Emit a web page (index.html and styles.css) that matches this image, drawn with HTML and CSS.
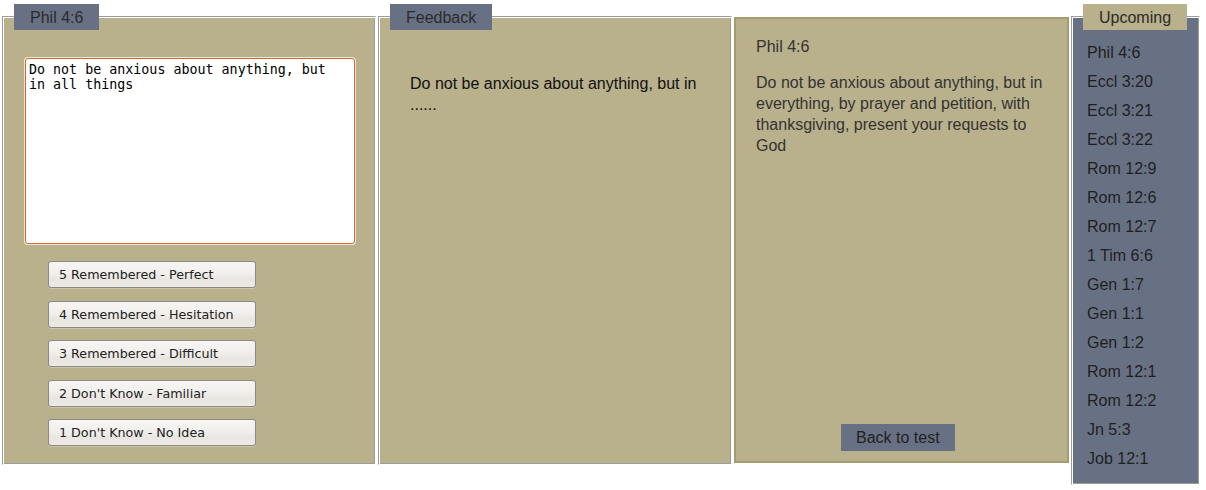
FILE: index.html
```html
<!DOCTYPE html>
<html>
<head>
<meta charset="utf-8">
<title>Memory verse</title>
<link rel="stylesheet" href="styles.css">
</head>
<body>
<div class="layout">
  <section class="panel panel-test">
    <div class="tab tab-slate">Phil 4:6</div>
    <textarea class="answer" spellcheck="false">Do not be anxious about anything, but in all things</textarea>
    <div class="grades">
      <button class="grade">5 Remembered - Perfect</button>
      <button class="grade">4 Remembered - Hesitation</button>
      <button class="grade">3 Remembered - Difficult</button>
      <button class="grade">2 Don't Know - Familiar</button>
      <button class="grade">1 Don't Know - No Idea</button>
    </div>
  </section>

  <section class="panel panel-feedback">
    <div class="tab tab-slate">Feedback</div>
    <p class="feedback-text">Do not be anxious about anything, but in ......</p>
  </section>

  <section class="panel-verse">
    <div class="verse-ref">Phil 4:6</div>
    <p class="verse-text">Do not be anxious about anything, but in everything, by prayer and petition, with thanksgiving, present your requests to God</p>
    <button class="back-btn">Back to test</button>
  </section>

  <section class="panel panel-upcoming">
    <div class="tab tab-tan">Upcoming</div>
    <ul class="upcoming-list">
      <li>Phil 4:6</li>
      <li>Eccl 3:20</li>
      <li>Eccl 3:21</li>
      <li>Eccl 3:22</li>
      <li>Rom 12:9</li>
      <li>Rom 12:6</li>
      <li>Rom 12:7</li>
      <li>1 Tim 6:6</li>
      <li>Gen 1:7</li>
      <li>Gen 1:1</li>
      <li>Gen 1:2</li>
      <li>Rom 12:1</li>
      <li>Rom 12:2</li>
      <li>Jn 5:3</li>
      <li>Job 12:1</li>
    </ul>
  </section>
</div>
</body>
</html>
```

FILE: styles.css
```css
html, body {
  margin: 0;
  padding: 0;
  background: #ffffff;
}

body {
  font-family: "Liberation Sans", Arial, sans-serif;
  font-size: 16px;
  color: #222;
}

.layout {
  display: flex;
  align-items: flex-start;
  gap: 2px;
  padding: 16px 0 0 2px;
}

/* grooved panels */
.panel {
  box-sizing: border-box;
  display: flex;
  flex-direction: column;
  align-items: flex-start;
  background: #b9b08c;
  border: 1px solid;
  border-color: #9c9c9c #ffffff #ffffff #9c9c9c;
  box-shadow: inset 1px 1px 0 #ffffff, inset -1px -1px 0 #9c9c9c;
  padding: 1px;
}

.tab {
  margin: -14px 0 0 10px;
  height: 26px;
  line-height: 27px;
  padding: 0 16px;
  font-size: 16px;
  color: #2b2b2b;
}

.tab-slate {
  background: #687184;
}

.tab-tan {
  background: #b9b08c;
}

/* test panel */
.panel-test {
  width: 374px;
  height: 449px;
}

.answer {
  box-sizing: border-box;
  width: 330px;
  height: 186px;
  margin: 28px 0 0 21px;
  padding: 3px 12px 1px 3px;
  border: 1px solid #d0672c;
  border-radius: 3px;
  box-shadow: 0 0 0 1px #efe6dc;
  background: #fff;
  font-family: "DejaVu Sans Mono", monospace;
  font-size: 13.33px;
  line-height: 15px;
  color: #000;
  resize: none;
  outline: none;
  overflow: hidden;
}

.grades {
  display: flex;
  flex-direction: column;
  gap: 12.5px;
  margin: 17px 0 0 44px;
}

.grade {
  box-sizing: border-box;
  width: 208px;
  height: 27px;
  padding: 0 0 0 10px;
  text-align: left;
  font-family: "DejaVu Sans", sans-serif;
  font-size: 12.7px;
  color: #222;
  border: 1px solid #8d8983;
  border-radius: 3px;
  background: linear-gradient(#f7f6f4 0%, #f1efec 45%, #e9e6e1 70%, #edeae6 100%);
  box-shadow: 0 1px 0 rgba(255,255,255,0.25);
}

/* feedback panel */
.panel-feedback {
  width: 354px;
  height: 449px;
}

.feedback-text {
  margin: 43px 30px 0 30px;
  line-height: 21px;
  color: #111;
}

/* verse panel */
.panel-verse {
  box-sizing: border-box;
  width: 335px;
  height: 446px;
  margin-top: 1px;
  display: flex;
  flex-direction: column;
  align-items: flex-start;
  background: #b9b08c;
  border: 2px solid #a69b6f;
  padding: 17px 20px 10px 20px;
}

.verse-ref {
  font-size: 16px;
  line-height: 21px;
  color: #333;
}

.verse-text {
  margin: 15px 0 0 0;
  line-height: 21px;
  color: #333;
}

.back-btn {
  margin: auto 0 0 85px;
  height: 27px;
  padding: 0 15px;
  border: none;
  background: #687184;
  font-family: "Liberation Sans", Arial, sans-serif;
  font-size: 16px;
  color: #222;
}

/* upcoming panel */
.panel-upcoming {
  width: 129px;
  height: 469px;
  background: #687184;
}

.upcoming-list {
  list-style: none;
  margin: 8px 0 0 14px;
  padding: 0;
}

.upcoming-list li {
  line-height: 29px;
  color: #1f1f1f;
}
```
